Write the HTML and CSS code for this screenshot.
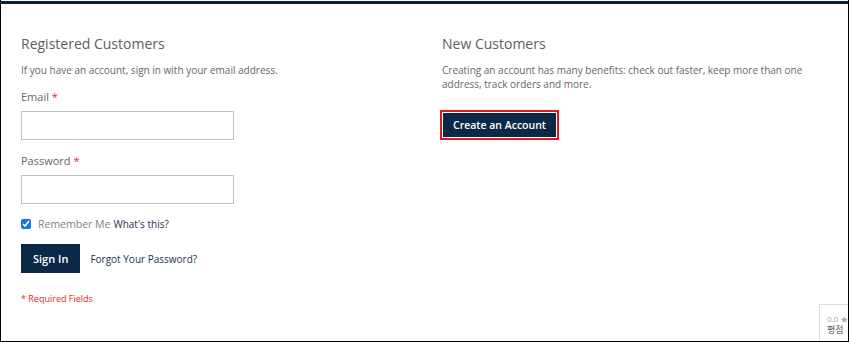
FILE: index.html
```html
<!DOCTYPE html>
<html lang="en">
  <head>
    <meta charset="UTF-8" />
    <title>Customer Login</title>
    <link rel="stylesheet" href="styles.css">
  </head>
  <body>
    <div class="frame">
      <div class="top-bar"></div>
      <div class="columns">
        <div class="block">
          <h2 class="block-title">Registered Customers</h2>
          <p class="note">If you have an account, sign in with your email address.</p>
          <form class="login-form">
            <div class="field">
              <label for="email">Email <span class="req">*</span></label>
              <input id="email" type="email" />
            </div>
            <div class="field">
              <label for="pass">Password <span class="req">*</span></label>
              <input id="pass" type="password" />
            </div>
            <div class="remember">
              <input id="remember" type="checkbox" checked />
              <label for="remember">Remember Me</label>
              <a href="#" class="link">What's this?</a>
            </div>
            <div class="actions">
              <button type="button" class="btn">Sign In</button>
              <a href="#" class="link">Forgot Your Password?</a>
            </div>
            <div class="required-note">* Required Fields</div>
          </form>
        </div>
        <div class="block">
          <h2 class="block-title">New Customers</h2>
          <p class="note">Creating an account has many benefits: check out faster, keep more than one address, track orders and more.</p>
          <div class="create-wrap">
            <button type="button" class="btn btn-create">Create an Account</button>
          </div>
        </div>
      </div>
      <div class="rating-badge">
        <div class="score">0.0 <span class="star">★</span></div>
        <div class="rating-label">평점</div>
      </div>
    </div>
  </body>
</html>
```

FILE: styles.css
```css
* {
  margin: 0;
  padding: 0;
  box-sizing: border-box;
}
body {
  font-family: "Open Sans", "Noto Sans CJK KR", sans-serif;
  background: #fff;
  color: #666;
}
.frame {
  position: relative;
  width: 849px;
  height: 342px;
  border-left: 1px solid #000;
  border-right: 1px solid #000;
  border-bottom: 1px solid #000;
  padding-top: 1px;
  overflow: hidden;
}
.top-bar {
  height: 3px;
  background: #0c1f38;
}
.columns {
  display: grid;
  grid-template-columns: 421px 1fr;
  padding: 0 20px;
}
.block-title {
  font-size: 14px;
  font-weight: 400;
  color: #5e5e5e;
  margin-top: 29px;
  line-height: 22px;
}
.note {
  font-size: 10px;
  line-height: 14px;
  margin-top: 8px;
  color: #666;
}
.login-form {
  margin-top: 12px;
}
.field {
  margin-bottom: 13px;
}
.field label {
  display: block;
  font-size: 11px;
  color: #666;
  line-height: 16px;
  margin-bottom: 6px;
}
.req {
  color: #e02b27;
}
.field input {
  display: block;
  width: 213px;
  height: 29px;
  border: 1px solid #c2c2c2;
  background: #fff;
}
.remember {
  display: flex;
  align-items: center;
  gap: 3px;
  font-size: 10.5px;
  color: #808080;
}
.remember input {
  width: 10px;
  height: 10px;
  accent-color: #1a73e8;
  margin-right: 4px;
}
.link {
  color: #1c3350;
  text-decoration: none;
  font-size: 10px;
}
.actions {
  display: flex;
  align-items: center;
  gap: 10px;
  margin-top: 13px;
}
.btn {
  background: #0c2847;
  color: #fff;
  border: 1px solid #0c2847;
  font-family: inherit;
  font-size: 11px;
  font-weight: 600;
  padding: 0 11px;
  height: 29px;
}
.required-note {
  color: #e02b27;
  font-size: 9px;
  margin-top: 19px;
}
.create-wrap {
  margin-top: 21px;
}
.btn-create {
  height: 24px;
  font-size: 10.5px;
  padding: 0 9px;
  outline: 2px solid #e0191f;
  outline-offset: 1px;
  margin-left: 1px;
}
.rating-badge {
  position: absolute;
  right: 0;
  bottom: 0;
  width: 29px;
  height: 37px;
  border: 1px solid #ddd;
  border-right: none;
  border-bottom: none;
  padding: 8px 0 0 7px;
  font-size: 8px;
  line-height: 11px;
  white-space: nowrap;
}
.score {
  color: #aaa;
}
.rating-label {
  color: #555;
  font-size: 9px;
}
```
